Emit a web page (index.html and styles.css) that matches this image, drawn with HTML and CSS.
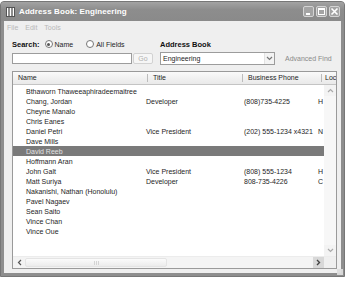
FILE: index.html
```html
<!DOCTYPE html>
<html>
	<head>
		<meta charset="utf-8">
		<title>Address Book: Engineering</title>
		<link rel="stylesheet" href="styles.css">
	</head>
	<body>
		<div class="window">
			<div class="titlebar">
				<svg class="app-icon" width="9" height="10" viewBox="0 0 9 10">
					<rect x="0.5" y="0.5" width="8" height="9" fill="#fff" stroke="#555"/>
					<line x1="3" y1="1" x2="3" y2="9" stroke="#444" stroke-width="1.2"/>
					<line x1="6" y1="1" x2="6" y2="9" stroke="#444" stroke-width="1.2"/>
				</svg>
				<span class="title">Address Book: Engineering</span>
				<div class="caption-btns">
					<span class="cbtn"><svg width="9" height="9" viewBox="0 0 9 9"><rect x="2" y="6" width="4" height="2" fill="#fff"/></svg></span>
					<span class="cbtn"><svg width="9" height="9" viewBox="0 0 9 9"><rect x="1.5" y="1.5" width="6" height="6" fill="none" stroke="#fff"/><rect x="1" y="1" width="7" height="2" fill="#fff"/></svg></span>
					<span class="cbtn"><svg width="9" height="9" viewBox="0 0 9 9"><path d="M1.5 1.5 L7.5 7.5 M7.5 1.5 L1.5 7.5" stroke="#fff" stroke-width="1.6"/></svg></span>
				</div>
			</div>
			<div class="client">
				<div class="menubar">
					<span>File</span>
					<span>Edit</span>
					<span>Tools</span>
				</div>
				<div class="search-labels">
					<div class="left-group">
						<b class="label">Search:</b>
						<span class="radio checked"></span><span class="rlabel">Name</span>
						<span class="radio"></span><span class="rlabel">All Fields</span>
					</div>
					<b class="label book-label">Address Book</b>
				</div>
				<div class="search-inputs">
					<div class="textbox"></div>
					<div class="go-btn">Go</div>
					<div class="dropdown">
						<span>Engineering</span>
						<span class="drop-arrow"><svg width="7" height="5" viewBox="0 0 7 5"><path d="M1 1 L3.5 3.5 L6 1" fill="none" stroke="#777" stroke-width="1.2"/></svg></span>
					</div>
					<span class="adv-find">Advanced Find</span>
				</div>
				<div class="list">
					<div class="list-head">
						<span class="hcol">Name</span>
						<span class="hcol">Title</span>
						<span class="hcol">Business Phone</span>
						<span class="hcol last">Loc</span>
					</div>
					<div class="list-body">
						<div class="rows">
							<div class="row"><span>Bthaworn Thaweeaphiradeemaitree</span><span></span><span></span><span></span></div>
							<div class="row"><span>Chang, Jordan</span><span>Developer</span><span>(808)735-4225</span><span>H</span></div>
							<div class="row"><span>Cheyne Manalo</span><span></span><span></span><span></span></div>
							<div class="row"><span>Chris Eanes</span><span></span><span></span><span></span></div>
							<div class="row"><span>Daniel Petri</span><span>Vice President</span><span>(202) 555-1234 x4321</span><span>N</span></div>
							<div class="row"><span>Dave Mills</span><span></span><span></span><span></span></div>
							<div class="row selected"><span>David Reeb</span><span></span><span></span><span></span></div>
							<div class="row"><span>Hoffmann Aran</span><span></span><span></span><span></span></div>
							<div class="row"><span>John Galt</span><span>Vice President</span><span>(808) 555-1234</span><span>H</span></div>
							<div class="row"><span>Matt Suriya</span><span>Developer</span><span>808-735-4226</span><span>C</span></div>
							<div class="row"><span>Nakanishi, Nathan (Honolulu)</span><span></span><span></span><span></span></div>
							<div class="row"><span>Pavel Nagaev</span><span></span><span></span><span></span></div>
							<div class="row"><span>Sean Saito</span><span></span><span></span><span></span></div>
							<div class="row"><span>Vince Chan</span><span></span><span></span><span></span></div>
							<div class="row"><span>Vince Oue</span><span></span><span></span><span></span></div>
						</div>
						<div class="vscroll">
							<span class="sbtn"><svg width="7" height="5" viewBox="0 0 7 5"><path d="M1 4 L3.5 1.5 L6 4" fill="none" stroke="#aaa" stroke-width="1.2"/></svg></span>
							<span class="sbtn"><svg width="7" height="5" viewBox="0 0 7 5"><path d="M1 1 L3.5 3.5 L6 1" fill="none" stroke="#aaa" stroke-width="1.2"/></svg></span>
						</div>
					</div>
					<div class="hscroll">
						<span class="sbtn"><svg width="5" height="7" viewBox="0 0 5 7"><path d="M4 1 L1.5 3.5 L4 6" fill="none" stroke="#555" stroke-width="1.2"/></svg></span>
						<div class="htrack"><div class="thumb"><span class="grip"></span></div></div>
						<span class="sbtn dark"><svg width="5" height="7" viewBox="0 0 5 7"><path d="M1 1 L3.5 3.5 L1 6" fill="none" stroke="#444" stroke-width="1.4"/></svg></span>
						<span class="corner"></span>
					</div>
				</div>
			</div>
			<span class="resize-grip"></span>
		</div>
	</body>
</html>
```

FILE: styles.css
```css
html,
body {
	margin: 0;
	padding: 0;
	background: #fff;
}

body {
	font-family: "Liberation Sans", Arial, sans-serif;
	font-size: 7px;
	color: #1e1e1e;
}

.window {
	position: relative;
	box-sizing: border-box;
	width: 345px;
	height: 276px;
	margin-top: 1px;
	border: 1px solid #777;
	border-radius: 4px 4px 0 0;
	background: #8e8e8e;
	display: flex;
	flex-direction: column;
}

.titlebar {
	height: 19px;
	display: flex;
	align-items: center;
	padding: 0 4px 0 5px;
	background: linear-gradient(#a3a3a3, #8d8d8d 40%, #8a8a8a);
	border-radius: 3px 3px 0 0;
}

.app-icon {
	margin-right: 4px;
}

.title {
	flex: 1;
	color: #fff;
	font-weight: bold;
	font-size: 8px;
	letter-spacing: 0.1px;
}

.caption-btns {
	display: flex;
	gap: 2px;
}

.cbtn {
	box-sizing: border-box;
	width: 11px;
	height: 11px;
	border: 1px solid #d4d4d4;
	border-radius: 2px;
	background: #a4a4a4;
	display: flex;
	align-items: center;
	justify-content: center;
}

.cbtn svg {
	display: block;
}

.client {
	flex: 1;
	margin: 0 3px 3px;
	background: #efefef;
	display: flex;
	flex-direction: column;
	padding: 0 4px 3px 8px;
}

.menubar {
	height: 12px;
	display: flex;
	align-items: center;
	gap: 7px;
	margin-left: -5px;
	color: #b8b8b8;
}

.search-labels {
	height: 10px;
	margin-top: 6px;
	display: flex;
	align-items: center;
}

.left-group {
	width: 148px;
	display: flex;
	align-items: center;
}

.label {
	font-size: 7.5px;
	color: #111;
}

.left-group .label {
	margin-right: 5px;
}

.radio {
	box-sizing: border-box;
	width: 8px;
	height: 8px;
	border: 1px solid #777;
	border-radius: 50%;
	background: #fff;
	margin-right: 2px;
	position: relative;
}

.radio.checked::after {
	content: "";
	position: absolute;
	left: 1.5px;
	top: 1.5px;
	width: 3px;
	height: 3px;
	border-radius: 50%;
	background: #555;
}

.rlabel {
	margin-right: 13px;
}

.search-inputs {
	height: 13px;
	margin-top: 3px;
	display: flex;
	align-items: stretch;
}

.textbox {
	box-sizing: border-box;
	width: 120px;
	margin: 1px 0;
	border: 1px solid #9c9c9c;
	background: #fff;
}

.go-btn {
	box-sizing: border-box;
	width: 20px;
	margin: 1px 0 1px 1px;
	border: 1px solid #d2d2d2;
	border-radius: 2px;
	background: #f6f6f6;
	color: #b0b0b0;
	display: flex;
	align-items: center;
	justify-content: center;
}

.dropdown {
	box-sizing: border-box;
	width: 115px;
	margin-left: 7px;
	border: 1px solid #9c9c9c;
	background: #fff;
	display: flex;
	align-items: center;
	justify-content: space-between;
	padding-left: 2px;
}

.drop-arrow {
	box-sizing: border-box;
	width: 10px;
	height: 100%;
	display: flex;
	align-items: center;
	justify-content: center;
	background: #f3f3f3;
	border-left: 1px solid #e2e2e2;
}

.adv-find {
	margin-left: 10px;
	color: #8a8a8a;
	display: flex;
	align-items: center;
}

.list {
	box-sizing: border-box;
	height: 198px;
	margin-top: 6px;
	border: 1px solid #9a9a9a;
	background: #fff;
	display: flex;
	flex-direction: column;
}

.list-head {
	height: 12px;
	border-bottom: 1px solid #c4c4c4;
	background: linear-gradient(#fafafa, #e9e9e9);
	display: grid;
	grid-template-columns: 135px 95px 79px 1fr;
	align-items: center;
	overflow: hidden;
}

.hcol {
	padding-left: 5px;
	border-right: 1px solid #bcbcbc;
	line-height: 8px;
	white-space: nowrap;
}

.hcol.last {
	border-right: 0;
	padding-left: 3px;
}

.list-body {
	flex: 1;
	display: flex;
	min-height: 0;
}

.rows {
	flex: 1;
	padding-top: 1px;
	overflow: hidden;
}

.row {
	height: 10px;
	display: grid;
	grid-template-columns: 133px 98px 74px 1fr;
	align-items: center;
	white-space: nowrap;
	overflow: hidden;
}

.row span:first-child {
	padding-left: 13px;
}

.row.selected {
	background: #7a7a7a;
	color: #e2e2e2;
}

.vscroll {
	width: 12px;
	background: #f7f7f7;
	display: flex;
	flex-direction: column;
	justify-content: space-between;
}

.sbtn {
	width: 12px;
	height: 11px;
	display: flex;
	align-items: center;
	justify-content: center;
	background: #f3f3f3;
}

.sbtn.dark {
	background: #d8d8d8;
	width: 11px;
}

.hscroll {
	height: 11px;
	display: flex;
	background: #f4f4f4;
	border-top: 1px solid #ececec;
}

.htrack {
	flex: 1;
	display: flex;
}

.thumb {
	width: 140px;
	margin: 1px 0;
	border: 1px solid #e4e4e4;
	border-radius: 2px;
	background: linear-gradient(#fbfbfb, #ececec);
	display: flex;
	align-items: center;
	justify-content: center;
}

.grip {
	width: 5px;
	height: 4px;
	background: repeating-linear-gradient(90deg, #d4d4d4 0 1px, transparent 1px 2px);
}

.corner {
	width: 12px;
	background: #efefef;
}

.resize-grip {
	position: absolute;
	right: 1px;
	bottom: 1px;
	width: 6px;
	height: 6px;
	background: radial-gradient(circle, #ddd 0.7px, transparent 0.8px) 0 0 / 2px 2px;
}
```
